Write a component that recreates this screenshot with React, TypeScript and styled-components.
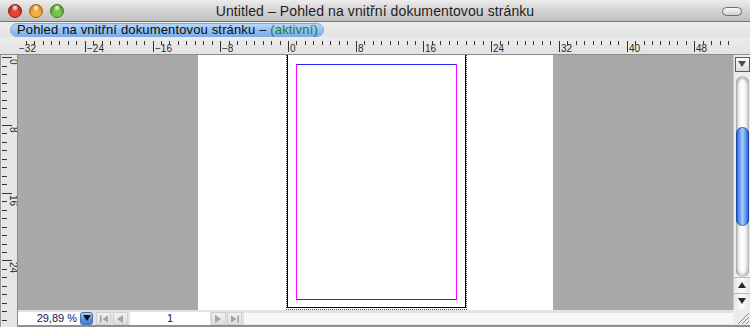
import React from 'react'
import styled, { createGlobalStyle } from 'styled-components'

const GlobalStyle = createGlobalStyle`
  html, body {
    margin: 0;
    padding: 0;
    overflow: hidden;
    background: #ffffff;
  }
`

const UNIT = 8.465
const H_ZERO = 288
const V_ZERO = 2.3

const Window = styled.div`
  width: 750px;
  height: 327px;
  display: flex;
  flex-direction: column;
  font-family: 'Liberation Sans', Arial, sans-serif;
  overflow: hidden;
`

const TitleBar = styled.div`
  height: 21px;
  border-bottom: 1px solid #747474;
  background: linear-gradient(#ececec, #d6d6d6 45%, #bfbfbf);
  display: flex;
  align-items: center;
  position: relative;
  padding-left: 8px;
`

const Lights = styled.div`
  display: flex;
  gap: 7px;
  align-items: center;
`

const Light = styled.span<{ color: string; dark: string }>`
  width: 14px;
  height: 14px;
  border-radius: 50%;
  box-sizing: border-box;
  border: 1px solid ${p => p.dark};
  background:
    radial-gradient(circle at 50% 22%, rgba(255, 255, 255, 0.95) 0, rgba(255, 255, 255, 0.2) 28%, transparent 32%),
    radial-gradient(circle at 50% 80%, ${p => p.color} 0, ${p => p.color} 35%, ${p => p.dark} 100%);
`

const Title = styled.div`
  position: absolute;
  left: 0;
  right: 0;
  text-align: center;
  font-size: 14px;
  letter-spacing: 0.1px;
  color: #1e1e1e;
  pointer-events: none;
`

const ToolbarPill = styled.span`
  position: absolute;
  right: 8px;
  top: 7px;
  width: 20px;
  height: 9px;
  box-sizing: border-box;
  border: 1px solid #6d6d6d;
  border-radius: 5px;
  background: linear-gradient(#fafafa, #cfcfcf);
`

const TabBar = styled.div`
  height: 15px;
  background: linear-gradient(#ededed, #e2e2e2);
  display: flex;
  align-items: flex-end;
  padding-left: 10px;
`

const TabPill = styled.div`
  height: 14px;
  box-sizing: border-box;
  padding: 0 5px 0 6px;
  border-radius: 7px;
  background: linear-gradient(#b7d6f8, #93bff2 55%, #7cafee);
  border: 1px solid #7fabe4;
  font-size: 13px;
  letter-spacing: 0.15px;
  line-height: 12px;
  color: #0d0d0d;
  white-space: nowrap;
`

const Active = styled.span`
  color: #2b7a2b;
`

const Workspace = styled.div`
  display: grid;
  grid-template-columns: 18px 715px 17px;
  grid-template-rows: 18px 255px 17px;
`

const HRulerBox = styled.div`
  grid-column: 1 / 4;
  grid-row: 1;
  background: linear-gradient(#ebebeb, #e3e3e3);
  border-bottom: 1px solid #8c8c8c;
  box-sizing: border-box;
`

const VRulerBox = styled.div`
  grid-column: 1;
  grid-row: 2 / 4;
  background: #e6e6e6;
  border-right: 1px solid #8c8c8c;
  border-left: 1px solid #9a9a9a;
  box-sizing: border-box;
`

const Canvas = styled.div`
  grid-column: 2;
  grid-row: 2;
  display: flex;
  overflow: hidden;
`

const Pasteboard = styled.div`
  width: 180px;
  background: #a9a9a9;
`

const Spread = styled.div`
  width: 355px;
  background: #ffffff;
  padding-left: 88px;
  box-sizing: border-box;
`

const Bleed = styled.div`
  width: 181px;
  height: 255px;
  box-sizing: border-box;
  border-left: 1px dotted #e0141b;
  border-right: 1px dotted #e0141b;
  border-bottom: 1px dotted #e0141b;
  padding-bottom: 1px;
`

const Page = styled.div`
  height: 253px;
  box-sizing: border-box;
  border-left: 1px solid #000;
  border-right: 1px solid #000;
  border-bottom: 1px solid #000;
  padding: 9px 8px 7px 8px;
  background: #fff;
  display: flex;
`

const MarginBox = styled.div`
  flex: 1;
  border-top: 1px solid #2b28ff;
  border-bottom: 1px solid #2b28ff;
  border-left: 1px solid #ff00ff;
  border-right: 1px solid #ff00ff;
`

const VScroll = styled.div`
  grid-column: 3;
  grid-row: 2;
  background: #ededed;
  display: flex;
  flex-direction: column;
  align-items: center;
  border-left: 1px solid #c8c8c8;
  box-sizing: border-box;
`

const SplitButton = styled.div`
  width: 15px;
  height: 15px;
  margin-top: 2px;
  box-sizing: border-box;
  border: 1px solid #5a5a5a;
  background: linear-gradient(#fbfbfb, #dcdcdc);
  display: flex;
  align-items: center;
  justify-content: center;
`

const Track = styled.div`
  flex: 1;
  width: 13px;
  margin-top: 4px;
  border-radius: 7px;
  background: linear-gradient(90deg, #c9c9c9, #f6f6f6 30%, #ffffff 55%, #d6d6d6);
  box-shadow: inset 0 3px 3px rgba(0, 0, 0, 0.25), inset 0 -3px 3px rgba(0, 0, 0, 0.2);
  display: flex;
  flex-direction: column;
`

const Thumb = styled.div`
  width: 13px;
  border-radius: 7px;
  background: linear-gradient(90deg, #1f4fc9, #5a95f0 25%, #a6cbfb 50%, #5a95f0 75%, #1f4fc9);
  box-shadow: inset 0 0 0 1px rgba(20, 50, 140, 0.5);
`

const ArrowButton = styled.div<{ last?: boolean }>`
  width: 16px;
  height: 15px;
  display: flex;
  align-items: center;
  justify-content: center;
  border-top: 1px solid #bcbcbc;
  background: linear-gradient(90deg, #e6e6e6, #fafafa 50%, #e6e6e6);
  margin-bottom: ${p => (p.last ? '1px' : '0')};
`

const BottomBar = styled.div`
  grid-column: 2;
  grid-row: 3;
  display: flex;
  align-items: stretch;
  box-sizing: border-box;
  padding-top: 2px;
  border-bottom: 2px solid #8f8f8f;
  background: #e2e2e2;
`

const ZoomField = styled.div`
  width: 62px;
  background: #ffffff;
  font-size: 11px;
  line-height: 13px;
  color: #14145a;
  text-align: right;
  padding-right: 3px;
  box-sizing: border-box;
`

const DropButton = styled.div`
  width: 13px;
  border-radius: 3px;
  background: linear-gradient(#b6d4f7, #5b93e8 55%, #3f7ce0);
  border: 1px solid #4a6fa8;
  box-sizing: border-box;
  display: flex;
  align-items: center;
  justify-content: center;
  margin-right: 3px;
`

const NavButton = styled.div<{ gap: number }>`
  width: 15px;
  margin-right: ${p => p.gap}px;
  background: linear-gradient(#f0f0f0, #dedede);
  border: 1px solid #d0d0d0;
  box-sizing: border-box;
  display: flex;
  align-items: center;
  justify-content: center;
`

const PageField = styled.div`
  width: 80px;
  margin-right: 1px;
  background: #ffffff;
  font-size: 11px;
  line-height: 13px;
  color: #14145a;
  text-align: center;
`

const HScroll = styled.div`
  flex: 1;
  margin-left: 1px;
  background: #f7f7f7;
  border-top: 1px dotted #cfcfcf;
  border-bottom: 1px dotted #cfcfcf;
  box-sizing: border-box;
`

const Grip = styled.div`
  grid-column: 3;
  grid-row: 3;
  background: #ececec;
  border-bottom: 2px solid #8f8f8f;
  box-sizing: border-box;
  display: flex;
  align-items: flex-end;
  justify-content: flex-end;
`

const RulerText = styled.text`
  font-family: 'Liberation Sans', Arial, sans-serif;
  font-size: 10px;
  fill: #2a2a2a;
`

function HorizontalRuler() {
  const ticks = []
  for (let u = -34; u <= 54; u++) {
    const x = Math.round(H_ZERO + u * UNIT) + 0.5
    if (x > 732) continue
    const major = u % 8 === 0
    if (x >= 18) {
      ticks.push(<line key={u} x1={x} x2={x} y1={4} y2={major ? 15 : 8} stroke="#333" strokeWidth={1} />)
    }
    if (major && x >= 16) {
      ticks.push(
        <RulerText key={'l' + u} x={x + 1.5} y={15}>
          {u < 0 ? '\u2212' + Math.abs(u) : u}
        </RulerText>
      )
    }
  }
  return (
    <svg width={750} height={17} style={{ display: 'block' }}>
      {ticks}
    </svg>
  )
}

function VerticalRuler() {
  const ticks = []
  for (let u = 0; u <= 32; u++) {
    const y = Math.round(V_ZERO + u * UNIT) + 0.5
    if (y > 272) continue
    const major = u % 8 === 0
    ticks.push(<line key={u} x1={1} x2={major ? 11 : 6} y1={y} y2={y} stroke="#333" strokeWidth={1} />)
    if (major) {
      ticks.push(
        <RulerText key={'l' + u} transform={`translate(8.5 ${y + 1.5}) rotate(90)`}>
          {u}
        </RulerText>
      )
    }
  }
  return (
    <svg width={16} height={272} style={{ display: 'block' }}>
      {ticks}
    </svg>
  )
}

const Tri = ({ dir, color }: { dir: 'up' | 'down' | 'left' | 'right'; color: string }) => {
  const pts = {
    up: '1,7 5,1 9,7',
    down: '1,1 9,1 5,7',
    left: '7,1 7,9 1,5',
    right: '1,1 1,9 7,5',
  }[dir]
  return (
    <svg width={10} height={10} viewBox="0 0 10 10">
      <polygon points={pts} fill={color} />
    </svg>
  )
}

const EdgeIcon = ({ flip }: { flip?: boolean }) => (
  <svg width={10} height={10} viewBox="0 0 10 10" style={{ transform: flip ? 'scaleX(-1)' : undefined }}>
    <rect x={1} y={1.5} width={1.6} height={7} fill="#a3a3a3" />
    <polygon points="9,1.5 9,8.5 3.5,5" fill="#a3a3a3" />
  </svg>
)

export default function App() {
  const thumbTop = 51
  const thumbHeight = 99
  return (
    <>
      <GlobalStyle />
      <Window>
        <TitleBar>
          <Lights>
            <Light color="#e3443b" dark="#8e1c17" />
            <Light color="#f4b13b" dark="#a8620f" />
            <Light color="#73c64a" dark="#3a7a1c" />
          </Lights>
          <Title>Untitled – Pohled na vnitřní dokumentovou stránku</Title>
          <ToolbarPill />
        </TitleBar>
        <TabBar>
          <TabPill>
            Pohled na vnitřní dokumentovou stránku – <Active>(aktivní)</Active>
          </TabPill>
        </TabBar>
        <Workspace>
          <HRulerBox>
            <HorizontalRuler />
          </HRulerBox>
          <VRulerBox>
            <VerticalRuler />
          </VRulerBox>
          <Canvas>
            <Pasteboard />
            <Spread>
              <Bleed>
                <Page>
                  <MarginBox />
                </Page>
              </Bleed>
            </Spread>
            <Pasteboard />
          </Canvas>
          <VScroll>
            <SplitButton>
              <Tri dir="down" color="#4a4a4a" />
            </SplitButton>
            <Track>
              <div style={{ height: thumbTop }} />
              <Thumb style={{ height: thumbHeight }} />
            </Track>
            <ArrowButton>
              <Tri dir="up" color="#2a2a2a" />
            </ArrowButton>
            <ArrowButton last>
              <Tri dir="down" color="#2a2a2a" />
            </ArrowButton>
          </VScroll>
          <BottomBar>
            <ZoomField>29,89 %</ZoomField>
            <DropButton>
              <Tri dir="down" color="#111" />
            </DropButton>
            <NavButton gap={2}>
              <EdgeIcon />
            </NavButton>
            <NavButton gap={2}>
              <Tri dir="left" color="#a3a3a3" />
            </NavButton>
            <PageField>1</PageField>
            <NavButton gap={1}>
              <Tri dir="right" color="#a3a3a3" />
            </NavButton>
            <NavButton gap={1}>
              <EdgeIcon flip />
            </NavButton>
            <HScroll />
          </BottomBar>
          <Grip>
            <svg width={15} height={15} viewBox="0 0 15 15">
              <line x1={3} y1={14} x2={14} y2={3} stroke="#8a8a8a" />
              <line x1={7} y1={14} x2={14} y2={7} stroke="#8a8a8a" />
              <line x1={11} y1={14} x2={14} y2={11} stroke="#8a8a8a" />
            </svg>
          </Grip>
        </Workspace>
      </Window>
    </>
  )
}
